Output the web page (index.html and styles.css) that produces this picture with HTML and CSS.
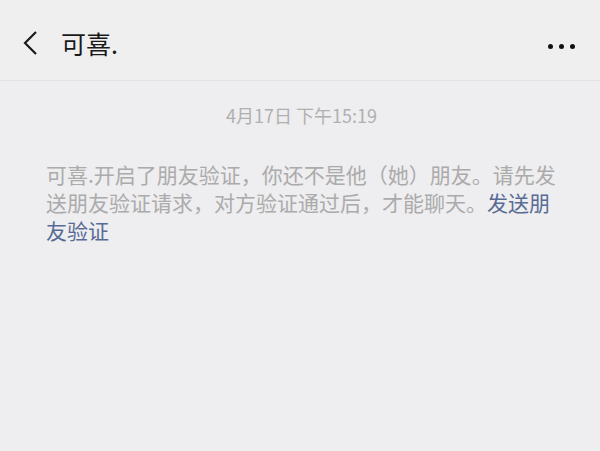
FILE: index.html
```html
<!DOCTYPE html>
<html>
    <head>
        <title>可喜.</title>
        <link rel="stylesheet" href="styles.css">
    </head>
    <body>
        <div id="header">
            <div class="left">
                <svg class="back" width="16" height="26" viewBox="0 0 16 26">
                    <path d="M14 2 L3 13 L14 24" fill="none" stroke="#1a1a1a" stroke-width="2.2"/>
                </svg>
                <span class="title">可喜.</span>
            </div>
            <div class="more">
                <span></span><span></span><span></span>
            </div>
        </div>
        <div id="chat">
            <div class="time">4月17日 下午15:19</div>
            <div class="notice">可喜.开启了朋友验证，你还不是他（她）朋友。请先发送朋友验证请求，对方验证通过后，才能聊天。<span class="link">发送朋友验证</span></div>
        </div>
    </body>
</html>
```

FILE: styles.css
```css
body {
    font-family: "Noto Sans CJK SC", "Noto Sans", sans-serif;
    margin: 0;
    padding: 0;
    background-color: #eeedef;
    height: 451px;
    overflow: hidden;
}

#header {
    height: 81px;
    background-color: #efefef;
    border-bottom: 1px solid #e3e3e3;
    display: flex;
    align-items: center;
    justify-content: space-between;
    padding: 0 20px 0 22px;
    box-sizing: border-box;
}

#header .left {
    display: flex;
    align-items: center;
}

#header .back {
    margin-top: 6px;
    margin-right: 23px;
}

#header .title {
    font-size: 25px;
    color: #1a1a1a;
    margin-top: 6px;
}

#header .more {
    display: flex;
    gap: 6px;
    margin-top: 12px;
    margin-right: 5px;
}

#header .more span {
    width: 5px;
    height: 5px;
    border-radius: 50%;
    background-color: #111;
}

#chat {
    padding: 0 40px 0 46px;
}

.time {
    text-align: center;
    font-size: 18px;
    color: #b0b0b0;
    margin-top: 20px;
    line-height: 28px;
    padding-right: 3px;
}

.notice {
    margin-top: 31px;
    width: 514px;
    font-size: 21px;
    line-height: 28px;
    color: #ababab;
}

.notice .link {
    color: #576b95;
}
```
